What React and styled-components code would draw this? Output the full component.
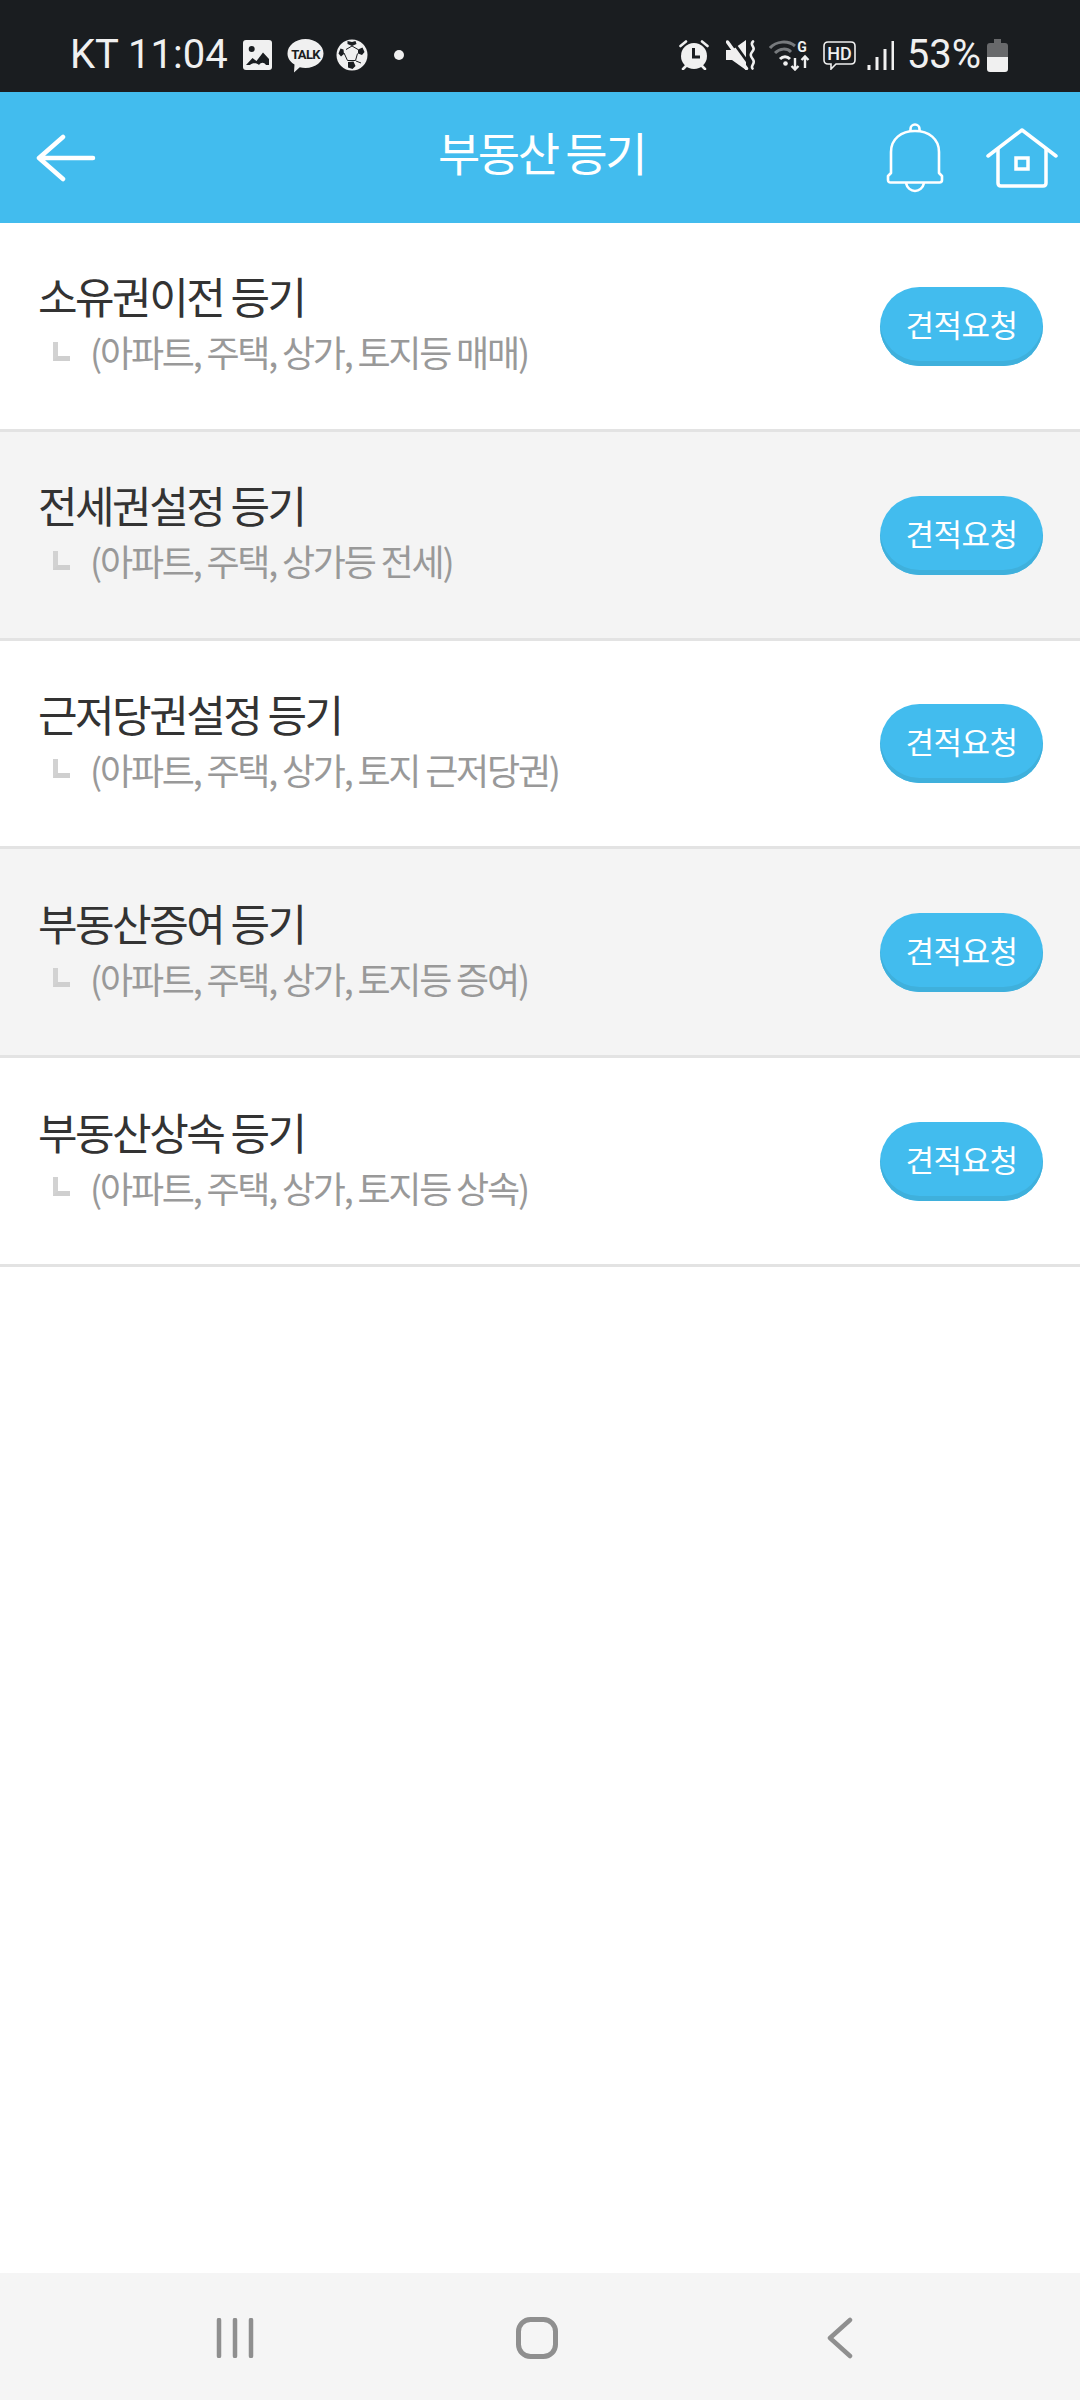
import React from "react";
import styled, { createGlobalStyle } from "styled-components";

const GlobalStyle = createGlobalStyle`
  html, body {
    margin: 0;
    padding: 0;
    background: #fff;
  }
  * {
    box-sizing: border-box;
  }
`;

const Page = styled.div`
  width: 1080px;
  height: 2400px;
  display: flex;
  flex-direction: column;
  background: #fff;
  font-family: "Noto Sans CJK KR", "Noto Sans", sans-serif;
  overflow: hidden;
`;

const StatusBar = styled.div`
  height: 92px;
  flex: none;
  background: #1a1d20;
  color: #f0f0f0;
  display: flex;
  align-items: center;
  justify-content: space-between;
  padding: 18px 72px 0 70px;
  font-family: Roboto, "Liberation Sans", sans-serif;
`;

const StatusGroup = styled.div`
  display: flex;
  align-items: center;
  height: 40px;
`;

const StatusText = styled.span`
  font-size: 40px;
  line-height: 40px;
  font-weight: 400;
  margin-right: ${(p) => p.$after || 0}px;
`;

const StatusIcon = styled.svg`
  display: block;
  flex: none;
  margin-right: ${(p) => p.$after || 0}px;
`;

const Header = styled.header`
  height: 131px;
  flex: none;
  background: #42bcee;
  display: grid;
  grid-template-columns: 1fr auto 1fr;
  align-items: center;
  padding: 0 22px 0 36px;
`;

const Title = styled.h1`
  margin: 0 11px 13px 0;
  font-size: 46px;
  line-height: 60px;
  font-weight: 400;
  letter-spacing: -2.5px;
  color: #fff;
`;

const HeaderRight = styled.div`
  display: flex;
  justify-content: flex-end;
  align-items: center;
  gap: 42px;
`;

const Icon = styled.svg`
  display: block;
  flex: none;
`;

const List = styled.main`
  flex: 1;
`;

const Row = styled.div`
  height: 208.8px;
  display: flex;
  align-items: center;
  justify-content: space-between;
  padding: 0 37px 0 38px;
  background: ${(p) => (p.$shaded ? "#f4f4f4" : "#fff")};
  border-bottom: 3px solid #e3e3e3;
`;

const RowText = styled.div`
  display: flex;
  flex-direction: column;
  margin-bottom: 10px;
`;

const RowTitle = styled.div`
  font-size: 43px;
  line-height: 58px;
  letter-spacing: -2.5px;
  color: #333;
  margin-bottom: 3px;
`;

const RowSub = styled.div`
  display: flex;
  align-items: center;
  font-size: 36px;
  line-height: 48px;
  letter-spacing: -2.2px;
  color: #999;
  padding-left: 15px;
`;

const Corner = styled.span`
  width: 17px;
  height: 19px;
  margin-right: 20px;
  border-left: 5px solid #d2d2d2;
  border-bottom: 5px solid #cfcfcf;
`;

const RequestButton = styled.button`
  width: 163px;
  height: 79px;
  margin-top: 1px;
  border: 0;
  border-radius: 40px;
  padding: 0 0 6px;
  background: #42bcee;
  box-shadow: inset 0 -5px 0 #3fb0dc;
  color: #fff;
  font-family: inherit;
  font-size: 31px;
  letter-spacing: -0.5px;
`;

const NavBar = styled.nav`
  height: 127px;
  flex: none;
  background: #f5f5f5;
  display: flex;
  align-items: center;
  padding: 2px 0 0 216px;
`;

const NavHome = styled(Icon)`
  margin-left: 262px;
`;

const NavBack = styled(Icon)`
  margin-left: 269px;
`;

const rows = [
  ["소유권이전 등기", "(아파트, 주택, 상가, 토지등 매매)"],
  ["전세권설정 등기", "(아파트, 주택, 상가등 전세)"],
  ["근저당권설정 등기", "(아파트, 주택, 상가, 토지 근저당권)"],
  ["부동산증여 등기", "(아파트, 주택, 상가, 토지등 증여)"],
  ["부동산상속 등기", "(아파트, 주택, 상가, 토지등 상속)"],
];

function App() {
  return (
    <Page>
      <GlobalStyle />
      <StatusBar>
        <StatusGroup>
          <StatusText $after={15}>KT 11:04</StatusText>
          <StatusIcon $after={15} width="29" height="30" viewBox="0 0 29 30">
            <rect width="29" height="30" rx="3" fill="#f0f0f0" />
            <circle cx="8.700" cy="9" r="3" fill="#1a1d20" />
            <path d="M3 25l6.500-7 4 3 6.500-8.500 6 6.500v6h-3c-2-3-5-3-7 0-2-2.500-7-2.500-9 0z" fill="#1a1d20" />
          </StatusIcon>
          <StatusIcon $after={12} width="37" height="35" viewBox="0 0 37 35">
            <path d="M18.500 1C28.500 1 36.500 7.500 36.500 15.500S28.500 30 18.500 30C16.500 30 14.500 29.800 12.800 29.200L7 34.500 7.500 26.500C3 24 .5 20 .5 15.500.5 7.500 8.500 1 18.500 1z" fill="#f0f0f0" />
            <text x="18.500" y="20.500" textAnchor="middle" fontFamily="Roboto, sans-serif" fontWeight="700" fontSize="13" fill="#1a1d20" letterSpacing="-.7">TALK</text>
          </StatusIcon>
          <StatusIcon $after={26} width="32" height="32" viewBox="0 0 32 32">
            <circle cx="16" cy="16" r="15.500" fill="#f0f0f0" />
            <path d="M11.500 2l4.500 1 3.500-1 1 3-4.500 2-4.500-2zM22 10.500l4.500-2 2 4.500-2.500 3-4-1.500zM4.500 9.500l3 1 .5 4.500-3 2.500-2.500-3zM12 23l5.500-.5 2 4.500-3 3-4.500-1.500z" fill="#1a1d20" />
            <path d="M16 7l-6 3.500M16 7l6 3.500M8 14l3.500 7.500h8l2-7M20 22l5 2" fill="none" stroke="#1a1d20" strokeWidth="1" />
          </StatusIcon>
          <StatusIcon width="10" height="10" viewBox="0 0 10 10">
            <circle cx="5" cy="5" r="5" fill="#f0f0f0" />
          </StatusIcon>
        </StatusGroup>
        <StatusGroup>
          <StatusIcon $after={17} width="30" height="30" viewBox="0 0 30 30">
            <circle cx="15" cy="16" r="13" fill="#f0f0f0" />
            <path d="M14.500 8v9h6.500" fill="none" stroke="#1a1d20" strokeWidth="3" />
            <path d="M1.500 6L7 1.500M28.500 6L23 1.500M4 29l3-3M26 29l-3-3" stroke="#f0f0f0" strokeWidth="2.600" strokeLinecap="round" />
          </StatusIcon>
          <StatusIcon $after={13} width="30" height="30" viewBox="0 0 30 30">
            <path d="M0 10h6L20 0v30L6 20H0z" fill="#f0f0f0" />
            <path d="M5-1l21 29" stroke="#1a1d20" strokeWidth="2.800" />
            <path d="M1.500 2l19 26.500" stroke="#f0f0f0" strokeWidth="3.400" strokeLinecap="round" />
            <path d="M27 1.500c-4 4 3 5 0 9s-3 5 0 9-3 6-.5 9" fill="none" stroke="#f0f0f0" strokeWidth="2.600" strokeLinecap="round" />
          </StatusIcon>
          <StatusIcon $after={12} width="42" height="32" viewBox="0 0 42 32">
            <path d="M1 9C7 2 19 1 26 7" fill="none" stroke="#777a7d" strokeWidth="3" />
            <path d="M6 14c5-5 12-5 16-1" fill="none" stroke="#777a7d" strokeWidth="3" />
            <path d="M11 20c3-3 7-3 10 0" fill="none" stroke="#f0f0f0" strokeWidth="3" />
            <circle cx="16.500" cy="24.500" r="2.300" fill="#f0f0f0" />
            <path d="M26 19v12M22.500 27l3.500 3.500 3.500-3.500M36 29V17M32.500 21l3.500-3.500 3.500 3.500" fill="none" stroke="#f0f0f0" strokeWidth="2.400" />
            <text x="33" y="13" textAnchor="middle" fontFamily="Roboto, sans-serif" fontSize="14" fontWeight="700" fill="#f0f0f0">G</text>
          </StatusIcon>
          <StatusIcon $after={11} width="33" height="29" viewBox="0 0 33 29">
            <path d="M5 1h23c2.500 0 4 1.500 4 4v14c0 2.500-1.500 4-4 4H13l-5 5v-5H5c-2.500 0-4-1.500-4-4V5c0-2.500 1.500-4 4-4z" fill="none" stroke="#f0f0f0" strokeWidth="1.600" />
            <text x="16.500" y="18.500" textAnchor="middle" fontFamily="Roboto, sans-serif" fontSize="18" fontWeight="500" fill="#f0f0f0">HD</text>
          </StatusIcon>
          <StatusIcon $after={13} width="27" height="29" viewBox="0 0 27 29">
            <path d="M2 29v-5M10 29V16M18 29V8M26 29V0" fill="none" stroke="#f0f0f0" strokeWidth="3" />
          </StatusIcon>
          <StatusText $after={6}>53%</StatusText>
          <StatusIcon width="21" height="33" viewBox="0 0 21 33">
            <path d="M7 0h7v4h4c2 0 3 1 3 3v12H0V7c0-2 1-3 3-3h4z" fill="#68696b" />
            <path d="M0 18h21v12c0 2-1 3-3 3H3c-2 0-3-1-3-3z" fill="#f0f0f0" />
          </StatusIcon>
        </StatusGroup>
      </StatusBar>

      <Header>
        <Icon width="60" height="48" viewBox="0 0 60 48">
          <path d="M27 3L3 24l24 21M3 24h54" fill="none" stroke="#fff" strokeWidth="4.500" strokeLinecap="round" strokeLinejoin="round" />
        </Icon>
        <Title>부동산 등기</Title>
        <HeaderRight>
          <Icon width="58" height="70" viewBox="0 0 58 70">
            <path d="M24.500 9V6a4.500 4.500 0 0 1 9 0v3" fill="none" stroke="#fff" strokeWidth="2.600" />
            <path d="M5 50V29C5 16 15 8 29 8s24 8 24 21v21l3 3v4c0 1.500-1 2.500-2.500 2.500h-49C3 59.500 2 58.500 2 57v-4z" fill="none" stroke="#fff" strokeWidth="2.600" strokeLinejoin="round" />
            <path d="M20 60c1 5 5 8 9 8s8-3 9-8" fill="none" stroke="#fff" strokeWidth="2.600" />
          </Icon>
          <Icon width="72" height="60" viewBox="0 0 72 60">
            <path d="M2 28L36 2l34 26" fill="none" stroke="#fff" strokeWidth="3.500" strokeLinecap="round" strokeLinejoin="round" />
            <path d="M12 21v34c0 2 1 3 3 3h42c2 0 3-1 3-3V21" fill="none" stroke="#fff" strokeWidth="3.500" />
            <rect x="30" y="30" width="12" height="11" fill="none" stroke="#fff" strokeWidth="3.500" />
          </Icon>
        </HeaderRight>
      </Header>

      <List>
        {rows.map(([title, sub], i) => (
          <Row key={title} $shaded={i % 2 === 1}>
            <RowText>
              <RowTitle>{title}</RowTitle>
              <RowSub>
                <Corner />
                {sub}
              </RowSub>
            </RowText>
            <RequestButton>견적요청</RequestButton>
          </Row>
        ))}
      </List>

      <NavBar>
        <Icon width="38" height="40" viewBox="0 0 38 40">
          <path d="M3 2v36M19 2v36M35 2v36" stroke="#8f8f8f" strokeWidth="4.500" strokeLinecap="round" />
        </Icon>
        <NavHome width="42" height="42" viewBox="0 0 42 42">
          <rect x="2.500" y="2.500" width="37" height="37" rx="12" fill="none" stroke="#8f8f8f" strokeWidth="5" />
        </NavHome>
        <NavBack width="26" height="42" viewBox="0 0 26 42">
          <path d="M23 3L3 21l20 18" fill="none" stroke="#8f8f8f" strokeWidth="4.500" strokeLinecap="round" strokeLinejoin="round" />
        </NavBack>
      </NavBar>
    </Page>
  );
}

export default App;
